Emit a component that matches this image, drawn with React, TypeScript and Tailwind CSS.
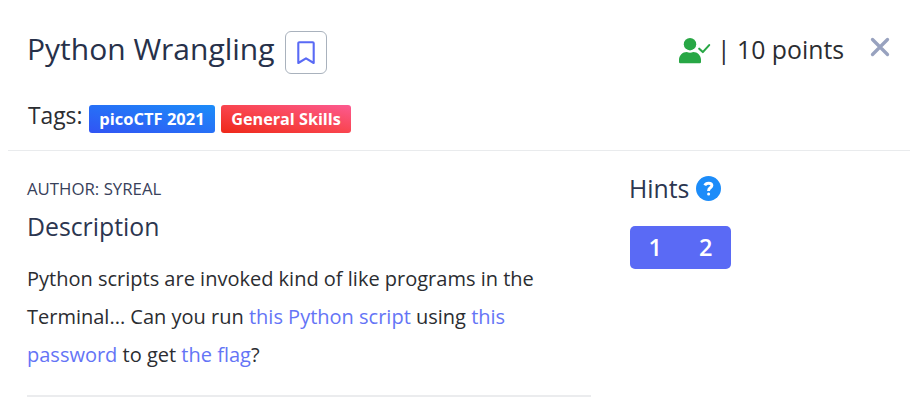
import React from "react";

function BookmarkIcon() {
  return (
    <svg width="18" height="24" viewBox="0 0 18 24" fill="none" stroke="#596af5" strokeWidth="2.1" strokeLinejoin="round">
      <path d="M1.3 22V2.2Q1.3 1.2 2.3 1.2H15.7Q16.7 1.2 16.7 2.2V22L9 17.3Z" />
    </svg>
  );
}

function SolvedIcon() {
  return (
    <svg width="32" height="26" viewBox="0 0 32 26" fill="#28a745">
      <circle cx="11" cy="6.2" r="6.2" />
      <path d="M0 24V21.8C0 17.5 3.5 14 7.8 14C10 15 12 15 14.2 14C18.5 14 22 17.5 22 21.8V24Q22 25.2 20.8 25.2H1.2Q0 25.2 0 24Z" />
      <path d="M20.2 10.7L23.8 14.1L30.2 7.1" fill="none" stroke="#28a745" strokeWidth="2.1" strokeLinecap="round" strokeLinejoin="round" />
    </svg>
  );
}

function CloseIcon() {
  return (
    <svg width="20" height="20" viewBox="0 0 20 20" stroke="#98a2bf" strokeWidth="3.3" strokeLinecap="round">
      <path d="M2.5 2.5L17.5 17.5M17.5 2.5L2.5 17.5" />
    </svg>
  );
}

export default function App() {
  return (
    <div className="h-[410px] w-[917px] overflow-hidden bg-white pr-[7px] pl-2 font-['Open_Sans',sans-serif] text-[#2b2d31]">
      <header className="h-[151px] border-b border-[#e9ebed] pr-5 pl-[19px] pt-[30px]">
        <div className="flex h-[44px] items-start justify-between">
          <div className="flex items-start">
            <h1 className="w-[258px] whitespace-nowrap text-[30px] leading-[38px] text-[#27314a]">Python Wrangling</h1>
            <button className="mt-px flex h-[43px] w-[42px] items-center justify-center rounded-[6px] border border-[#a9b2bd]">
              <BookmarkIcon />
            </button>
          </div>
          <div className="flex items-start text-[24.8px]">
            <div className="mt-2"><SolvedIcon /></div>
            <span className="ml-[6px] w-[129px] whitespace-nowrap leading-[38px]">| 10 points</span>
            <button className="mt-[7px] ml-6"><CloseIcon /></button>
          </div>
        </div>
        <div className="mt-[26px] flex items-start">
          <span className="w-[62px] whitespace-nowrap pl-px text-[22.8px] leading-[32px]">Tags:</span>
          <span className="mt-[5px] flex h-7 w-[126px] items-center justify-center rounded-[3px] bg-[linear-gradient(to_top_right,#3154f4,#1c8cf9)] pb-px text-[16.5px] font-bold leading-6 text-white">picoCTF 2021</span>
          <span className="mt-[5px] ml-[6px] flex h-7 w-[130px] items-center justify-center rounded-[3px] bg-[linear-gradient(to_top_right,#ee2819,#f9454f_50%,#fc5a91)] pb-px text-[16.2px] font-bold leading-6 text-white">General Skills</span>
        </div>
      </header>
      <main className="flex pl-[19px]">
        <section className="h-[246px] w-[564px] border-b-2 border-[#ebecee] pt-[26px]">
          <p className="text-[16.8px] leading-6 text-[#38415a]">AUTHOR: SYREAL</p>
          <h2 className="mt-[9px] h-[34px] text-[24.8px] leading-[32px] text-[#2c3650]">Description</h2>
          <p className="mt-4 whitespace-nowrap text-xl leading-[38px]">
            Python scripts are invoked kind of like programs in the<br />
            Terminal... Can you run <a className="text-[#6474f6]">this Python script</a> using <a className="text-[#6474f6]">this<br />
            password</a> to get <a className="text-[#6474f6]">the flag</a>?
          </p>
        </section>
        <aside className="ml-[38px] pt-[21px]">
          <div className="flex items-center">
            <h2 className="h-[34px] w-[67px] text-[24.8px] leading-[32px] text-[#2c3650]">Hints</h2>
            <span className="mb-px flex h-[25px] w-[25px] items-center justify-center rounded-full bg-[#1c8cf9]">
              <svg width="25" height="25" viewBox="0 0 25 25" fill="none" stroke="white" strokeWidth="2.9">
                <path d="M8.8 9.4C9.5 7.8 11 7.2 12.7 7.2C14.8 7.2 15.9 8.2 15.9 9.6C15.9 11.7 12.6 11.8 12.6 14.4V15" />
                <circle cx="12.6" cy="18" r="1.5" fill="white" stroke="none" />
              </svg>
            </span>
          </div>
          <div className="mt-5 ml-px flex h-[43px] w-[101px] items-center overflow-hidden rounded-[5px] bg-[#5a6af5] text-center text-[23.5px] font-semibold text-white">
            <button className="w-1/2">1</button>
            <button className="w-1/2">2</button>
          </div>
        </aside>
      </main>
    </div>
  );
}
